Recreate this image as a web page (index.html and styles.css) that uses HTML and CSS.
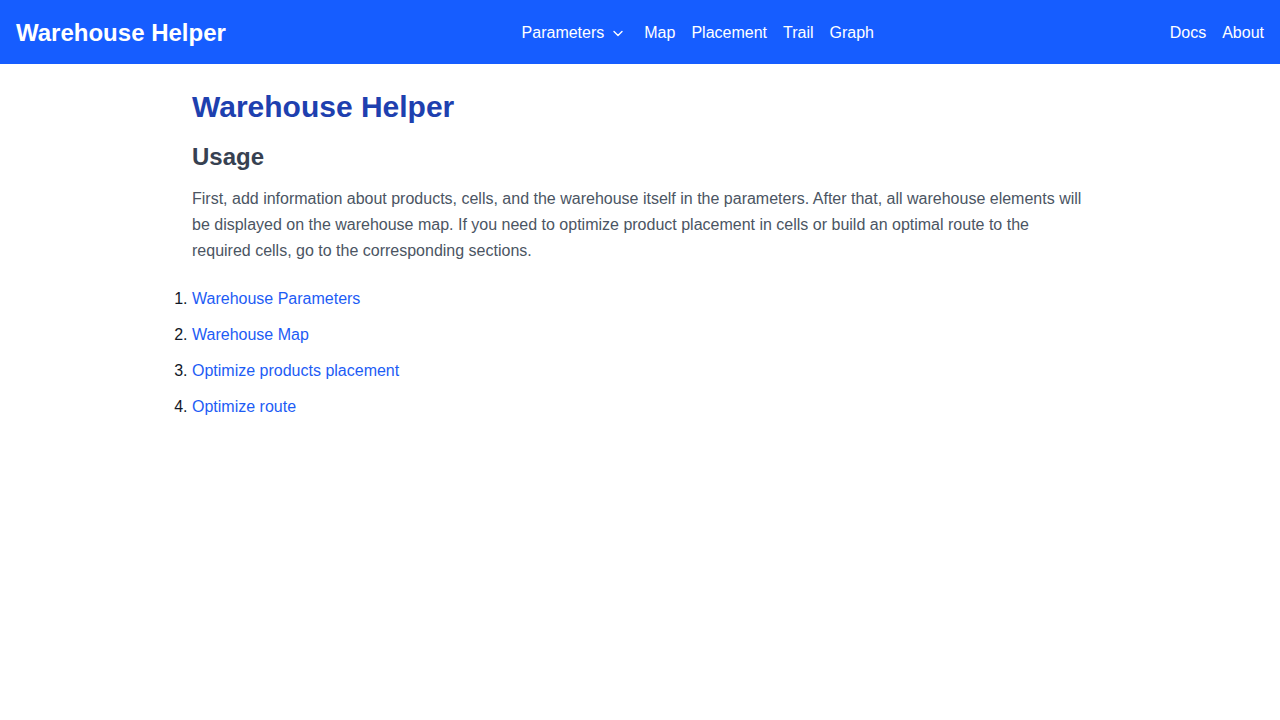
FILE: index.html
```html
<!DOCTYPE html>
<html lang="en">
<head>
<meta charset="utf-8">
<title>Warehouse Helper</title>
<link rel="stylesheet" href="styles.css">
</head>
<body>
<header class="topbar">
  <a class="brand" href="#">Warehouse Helper</a>
  <nav class="nav">
    <a class="nav-link dropdown" href="#">Parameters
      <svg class="chev" width="16" height="16" viewBox="0 0 16 16" aria-hidden="true"><path d="M4 6.5 8 10.5 12 6.5" fill="none" stroke="currentColor" stroke-width="1.4" stroke-linecap="round" stroke-linejoin="round"/></svg>
    </a>
    <a class="nav-link" href="#">Map</a>
    <a class="nav-link" href="#">Placement</a>
    <a class="nav-link" href="#">Trail</a>
    <a class="nav-link" href="#">Graph</a>
  </nav>
  <nav class="nav">
    <a class="nav-link" href="#">Docs</a>
    <a class="nav-link" href="#">About</a>
  </nav>
</header>
<main class="content">
  <h1 class="title">Warehouse Helper</h1>
  <h2 class="subtitle">Usage</h2>
  <p class="text">First, add information about products, cells, and the warehouse itself in the parameters. After that, all warehouse elements will be displayed on the warehouse map. If you need to optimize product placement in cells or build an optimal route to the required cells, go to the corresponding sections.</p>
  <ol class="steps">
    <li><a href="#">Warehouse Parameters</a></li>
    <li><a href="#">Warehouse Map</a></li>
    <li><a href="#">Optimize products placement</a></li>
    <li><a href="#">Optimize route</a></li>
  </ol>
</main>
</body>
</html>
```

FILE: styles.css
```css
* { box-sizing: border-box; }
body {
  margin: 0;
  font-family: "Liberation Sans", Arial, sans-serif;
  background: #ffffff;
  color: #111827;
}
a { text-decoration: none; }
.topbar {
  height: 64px;
  background: #165dff;
  padding: 2px 16px 0;
  display: flex;
  align-items: center;
  justify-content: space-between;
}
.brand {
  color: #ffffff;
  font-size: 24px;
  font-weight: 700;
}
.nav {
  display: flex;
  align-items: center;
  gap: 16px;
}
.nav-link {
  color: #ffffff;
  font-size: 16px;
  display: flex;
  align-items: center;
}
.chev { margin-left: 6px; margin-right: 2px; }
.content {
  max-width: 896px;
  margin: 0 auto;
  padding-top: 25px;
}
.title {
  margin: 0 0 16px;
  font-size: 30px;
  line-height: 36px;
  font-weight: 700;
  color: #1e40af;
}
.subtitle {
  margin: 0 0 13px;
  font-size: 24px;
  line-height: 32px;
  font-weight: 700;
  color: #374151;
}
.text {
  margin: 0 0 23px;
  font-size: 16px;
  line-height: 26px;
  color: #4b5563;
}
.steps {
  margin: 0;
  padding: 0;
  font-size: 16px;
  line-height: 24px;
  color: #111827;
}
.steps li { margin-bottom: 12px; }
.steps a { color: #1d5cf5; }
```
